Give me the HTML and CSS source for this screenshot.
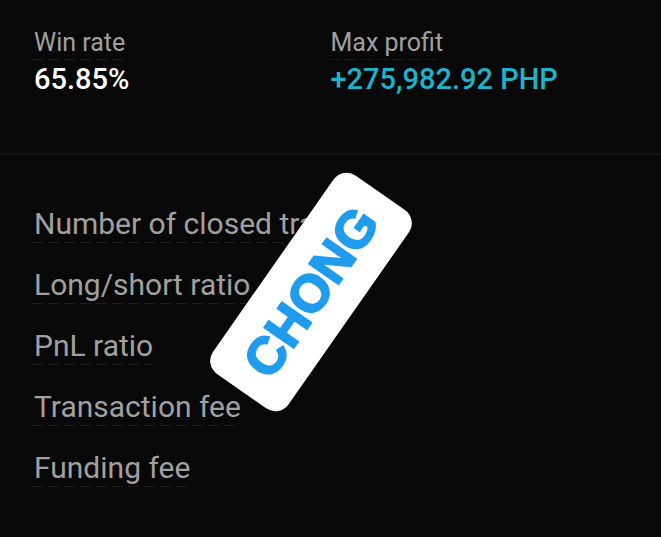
FILE: index.html
```html
<!DOCTYPE html>
<html lang="en">
  <head>
    <meta charset="UTF-8" />
    <meta name="viewport" content="width=device-width, initial-scale=1.0" />
    <title>Trading stats</title>
    <link rel="stylesheet" href="styles.css">
  </head>
  <body>
    <main>
      <dl class="summary">
        <div class="stat">
          <dt><span class="hint">Win rate</span></dt>
          <dd>65.85%</dd>
        </div>
        <div class="stat">
          <dt><span class="hint">Max profit</span></dt>
          <dd class="profit">+275,982.92 PHP</dd>
        </div>
      </dl>

      <ul class="details">
        <li><span class="hint">Number of closed trades</span></li>
        <li><span class="hint">Long/short ratio</span></li>
        <li><span class="hint">PnL ratio</span></li>
        <li><span class="hint">Transaction fee</span></li>
        <li><span class="hint">Funding fee</span></li>
      </ul>

      <div class="sticker">CHONG</div>
    </main>
  </body>
</html>
```

FILE: styles.css
```css
* {
  box-sizing: border-box;
}

body {
  margin: 0;
  background-color: #080808;
  color: #a0a0a0;
  font-family: Roboto, "Liberation Sans", sans-serif;
}

main {
  position: relative;
}

.summary {
  display: grid;
  grid-template-columns: 1fr 1fr;
  margin: 0;
  padding: 27px 36px 56px 32px;
  border-bottom: 2px solid #111;
}

.stat dt {
  font-size: 25px;
  line-height: 32px;
}

.stat dd {
  margin: 0;
  padding: 1px 2px 0;
  color: #fff;
  font-size: 29px;
  font-weight: 500;
  line-height: 36px;
}

.stat .profit {
  color: #1cb4cc;
}

/* long faint dashes under each label */
.hint {
  display: inline-block;
  padding: 0 0 1px 2px;
  background: repeating-linear-gradient(to right, #201f1d 0 11px, transparent 11px 16px) bottom / 100% 1px no-repeat;
}

.details {
  display: grid;
  gap: 25px;
  margin: 0;
  padding: 51px 32px 40px;
  list-style: none;
  font-size: 30px;
  line-height: 36px;
}

.details li {
  height: 36px;
}

/* rotated name tag lying over the list */
.sticker {
  position: absolute;
  top: 246px;
  left: 190px;
  width: 242px;
  height: 92px;
  border-radius: 16px;
  background-color: #fff;
  color: #209cee;
  font-family: "Liberation Sans", Arial, sans-serif;
  font-size: 52px;
  font-weight: 700;
  line-height: 92px;
  text-align: center;
  transform: rotate(-55deg);
  -webkit-text-stroke: 2px #209cee;
}
```
